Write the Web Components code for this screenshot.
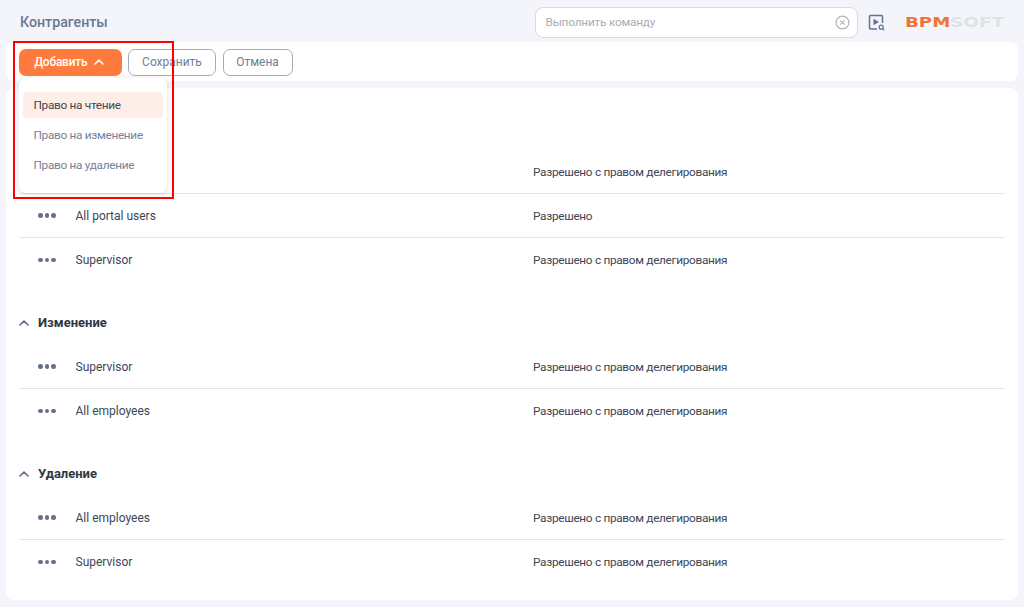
<!DOCTYPE html>
<html><head><meta charset="utf-8"><style>
html,body{margin:0;height:100%;background:#f3f5fa;overflow:hidden}
body{font-family:Roboto,"Noto Sans",sans-serif}
</style></head><body>
<app-page>
  <app-header slot="header"></app-header>
  <app-toolbar slot="toolbar"></app-toolbar>
  <perm-section title="" slot="content">
    <perm-row name="" value="Разрешено с правом делегирования"></perm-row>
    <perm-row name="All portal users" value="Разрешено"></perm-row>
    <perm-row name="Supervisor" value="Разрешено с правом делегирования"></perm-row>
  </perm-section>
  <perm-section title="Изменение" slot="content">
    <perm-row name="Supervisor" value="Разрешено с правом делегирования"></perm-row>
    <perm-row name="All employees" value="Разрешено с правом делегирования"></perm-row>
  </perm-section>
  <perm-section title="Удаление" slot="content">
    <perm-row name="All employees" value="Разрешено с правом делегирования"></perm-row>
    <perm-row name="Supervisor" value="Разрешено с правом делегирования"></perm-row>
  </perm-section>
  <app-menu slot="overlay"></app-menu>
</app-page>
<script>
function def(name,html){customElements.define(name,class extends HTMLElement{
  connectedCallback(){if(this.shadowRoot)return;const r=this.attachShadow({mode:'open'});r.innerHTML=typeof html==='function'?html(this):html;}
});}
const chev=(c,s=1.6)=>`<svg width="10" height="6" viewBox="0 0 10 6" fill="none"><path d="M1 5l4-4 4 4" stroke="${c}" stroke-width="${s}" stroke-linecap="round" stroke-linejoin="round"/></svg>`;
def('app-page',`<style>
:host{display:flex;flex-direction:column;height:607px;position:relative;width:1024px;box-sizing:border-box}
.bar{background:#fff;margin:0 6px;border-radius:8px}
.tb{height:39px;margin-bottom:7px;flex:none}
.content{flex:1;min-height:0;margin-bottom:7px;padding:17px 13px 0}
.mark{position:absolute;left:13px;top:41px;width:157px;height:154px;border:2px solid #f00;box-sizing:content-box;z-index:5}
.over{position:absolute;left:19px;top:78px;z-index:4}
</style><slot name="header"></slot><div class="bar tb"><slot name="toolbar"></slot></div>
<div class="bar content"><slot name="content"></slot></div>
<div class="over"><slot name="overlay"></slot></div><div class="mark"></div>`);
def('app-header',`<style>
:host{display:flex;height:42px;align-items:center;box-sizing:border-box;padding:2px 20px 0 20px;flex:none}
h1{font:500 14.2px Roboto,sans-serif;color:#6b778f;margin:0;flex:1}
.search{width:323.5px;height:31px;box-sizing:border-box;border:1px solid #d7dae1;border-radius:8px;background:#fff;display:flex;align-items:center;padding:0 7px 0 10px;font-size:11.8px;letter-spacing:-.2px;color:#a8adb6}
.search span{flex:1}
.run{margin:2px 0 0 10px;display:block}
.logo{margin-left:19px;display:flex;width:99px;height:14px;align-items:center;font:700 14px/14px "DejaVu Sans",sans-serif}
.logo b{display:inline-block;transform-origin:0 50%;font-weight:700;white-space:nowrap}
.b1{color:#f57234;transform:scaleX(1.3);width:45px;flex:none}
.b2{color:#dfe2e7;transform:scaleX(1.32);flex:none}
</style><h1>Контрагенты</h1>
<div class="search"><span>Выполнить команду</span>
<svg width="15" height="15" viewBox="0 0 15 15" fill="none" stroke="#b0b4bb" stroke-width="1.2"><circle cx="7.5" cy="7.5" r="6.4"/><path d="M5.3 5.3l4.4 4.4M9.7 5.3l-4.4 4.4"/></svg></div>
<svg class="run" width="18" height="18" viewBox="0 0 18 18" fill="none"><path d="M9 15H2.5a1 1 0 0 1-1-1V2.5a1 1 0 0 1 1-1h11a1 1 0 0 1 1 1V9" stroke="#66738f" stroke-width="1.5"/><path d="M5.5 4.8v6.4l5.4-3.2z" fill="#66738f"/><circle cx="13.2" cy="13.2" r="2" stroke="#66738f" stroke-width="1.2"/><path d="M14.7 14.7l1.6 1.6" stroke="#66738f" stroke-width="1.2"/></svg>
<div class="logo"><b class="b1">BPM</b><b class="b2">SOFT</b></div>`);
def('app-toolbar',`<style>
:host{display:flex;gap:6.5px;padding:6.5px 0 0 13px;align-items:flex-start;font-size:11.9px;letter-spacing:-.05px}
div{height:27px;box-sizing:border-box;border-radius:7px;display:flex;align-items:center;justify-content:center}
.p{width:102.5px;background:#ff7a3d;color:#fff;font-weight:500;gap:7px;letter-spacing:-.2px;padding-right:2px;box-sizing:border-box}
.s{border:1px solid #a2abbd;color:#6f7b92;background:#fff;letter-spacing:.05px}
</style><div class="p">Добавить ${chev('#fff')}</div><div class="s" style="width:88px">Сохранить</div><div class="s" style="width:70px">Отмена</div>`);
def('app-menu',`<style>
:host{display:block;width:148px;height:115px;box-sizing:border-box;background:#fff;border-radius:7px;box-shadow:0 1px 5px rgba(70,80,110,.22);padding:14px 4px 0;font-size:11.8px;letter-spacing:-.3px;color:#76819a}
div{height:26px;border-radius:4px;display:flex;align-items:center;padding-left:10.5px;margin-bottom:4px}
.a{background:#fdeee7;color:#3d4555}
</style><div class="a">Право на чтение</div><div>Право на изменение</div><div>Право на удаление</div>`);
def('perm-section',h=>{const t=h.getAttribute('title');return `<style>
:host{display:block;margin-bottom:18px}
.h{height:45px;display:flex;align-items:center;gap:9px;font:700 13px Roboto,sans-serif;color:#2f3744}
.c{width:10px;display:flex}
</style><div class="h">${t?`<span class="c">${chev('#5c6880')}</span>${t}`:''}</div><slot></slot>`});
def('perm-row',h=>{const n=h.getAttribute('name'),v=h.getAttribute('value');return `<style>
:host{display:flex;height:44px;align-items:center;border-bottom:1px solid #e4e6eb;box-sizing:border-box;font-size:12px;color:#3d4656}
:host(:last-child){border-bottom:0}
.d{width:56.5px;padding-left:19px;box-sizing:border-box;display:flex;gap:2px}
.d i{width:4.5px;height:4.5px;border-radius:50%;background:#66728a}
.n{width:457.5px}
.v{font-size:11.8px;letter-spacing:-.3px}
</style><span class="d">${n?'<i></i><i></i><i></i>':''}</span><span class="n">${n}</span><span class="v">${v}</span>`});
</script></body></html>
